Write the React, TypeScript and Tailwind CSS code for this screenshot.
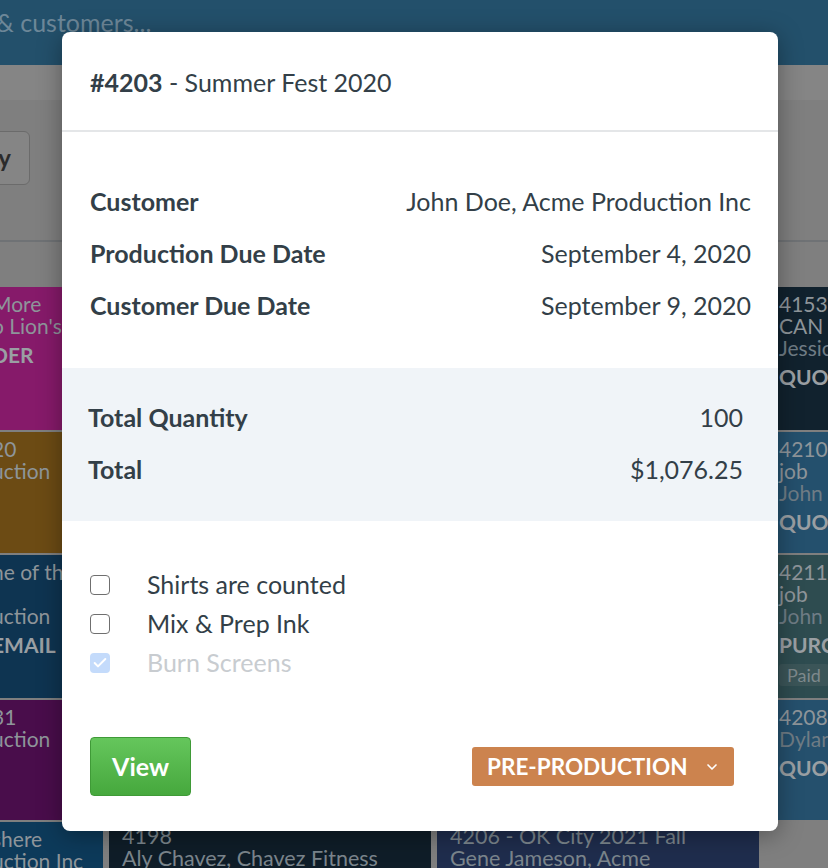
import { Check, ChevronDown } from "lucide-react";

const ink = "text-[#333f48]";

interface Card {
  bg: string;
  h: string;
  lines: string[];
  sub?: string[];
  status?: string;
  badge?: string;
}

const leftCards: Card[] = [
  { bg: "bg-[#861a6a]", h: "h-[143px]", lines: ["More", "o Lion's"], status: "DER" },
  { bg: "bg-[#6c4b14]", h: "h-[121px]", lines: ["20", "uction"] },
  { bg: "bg-[#0e3451]", h: "h-[143px]", lines: ["ne of th", "\u00a0", "uction"], status: "EMAIL" },
  { bg: "bg-[#490d4b]", h: "h-[120px]", lines: ["31", "uction"] },
  { bg: "bg-[#0d3a5a]", h: "h-[60px]", lines: ["shere", "uction Inc"] },
];

const rightCards: Card[] = [
  { bg: "bg-[#11222e]", h: "h-[143px]", lines: ["4153 - Spring", "CAN Koozies"], sub: ["Jessica Smith"], status: "QUOTE" },
  { bg: "bg-[#24506d]", h: "h-[121px]", lines: ["4210 - Test", "job"], sub: ["John Doe"], status: "QUOTE" },
  { bg: "bg-[#2e4c50]", h: "h-[143px]", lines: ["4211 - Test", "job"], sub: ["John Doe"], status: "PURCHASE ORDER", badge: "Paid" },
  { bg: "bg-[#25506d]", h: "h-[120px]", lines: ["4208 - Tees"], sub: ["Dylan Ross"], status: "QUOTE" },
];

function BoardCard({ card, shift }: { card: Card; shift?: boolean }) {
  return (
    <div className={`${card.bg} ${card.h} overflow-hidden whitespace-nowrap pt-[6px] text-[21px] leading-[22px] ${shift ? "-ml-[8px] pl-0" : "pl-[14px]"}`}>
      {card.lines.map((l, i) => (
        <div key={i} className="text-[#8e959a]">
          {l}
        </div>
      ))}
      {card.sub?.map((l, i) => (
        <div key={i} className="text-[#6f7c85]">
          {l}
        </div>
      ))}
      {card.status && (
        <div className="mt-[7px] font-bold text-[#9a9fa3]">{card.status}</div>
      )}
      {card.badge && (
        <div className="mt-[8px] inline-block rounded-[3px] bg-[#3b5558] px-[8px] text-[18px] leading-[22px] text-[#7e898c]">
          {card.badge}
        </div>
      )}
    </div>
  );
}

function Row({ label, value }: { label: string; value: string }) {
  return (
    <div className="flex h-[52px] items-center justify-between">
      <span className="font-bold">{label}</span>
      <span>{value}</span>
    </div>
  );
}

function CheckRow({ label, done }: { label: string; done?: boolean }) {
  return (
    <div className="flex h-[39px] items-center">
      {done ? (
        <span className="flex h-[20px] w-[20px] items-center justify-center rounded-[4px] bg-[#c4dbfb]">
          <Check className="h-[16px] w-[16px] text-white" strokeWidth={3} />
        </span>
      ) : (
        <span className="h-[20px] w-[20px] rounded-[4px] border-[1.5px] border-[#6f6f6f] bg-white" />
      )}
      <span className={`ml-[37px] ${done ? "text-[#c8ccd0]" : ink}`}>{label}</span>
    </div>
  );
}

export default function App() {
  return (
    <div className="relative h-[868px] w-[828px] overflow-hidden bg-[#7f7f7f] font-['Lato',sans-serif]">
      {/* dimmed board behind the dialog */}
      <div className="flex h-[65px] items-start bg-[#23506b] pt-[4px]">
        <span className="-ml-[4px] text-[25px] text-[#6d8798]">&amp; customers...</span>
      </div>
      <div className="h-[35px] bg-[#858585]" />
      <div className="h-[140px] pt-[31px]">
        <div className="-ml-[20px] flex h-[54px] w-[50px] items-center justify-end rounded-[6px] border border-[#6b6b6b] bg-[#858585] pr-[18px] text-[24px] font-bold text-[#2b2b2b]">
          y
        </div>
      </div>
      <div className="h-[2px] bg-[#6f7275]" />
      <div className="h-[45px]" />
      <div className="flex gap-[6px]">
        <div className="flex w-[103px] shrink-0 flex-col gap-[2px]">
          {leftCards.map((c, i) => (
            <BoardCard key={i} card={c} shift />
          ))}
        </div>
        <div className="flex w-[322px] shrink-0 flex-col">
          <div className="h-[535px]" />
          <div className="h-[60px] whitespace-nowrap bg-[#0f1d28] pl-[13px] pt-[3px] text-[21.5px] leading-[22px] text-[#7b858c]">
            <div>4198</div>
            <div>Aly Chavez, Chavez Fitness</div>
          </div>
        </div>
        <div className="flex w-[322px] shrink-0 flex-col">
          <div className="h-[535px]" />
          <div className="h-[60px] whitespace-nowrap bg-[#1f2d4d] pl-[13px] pt-[3px] text-[21.5px] leading-[22px] text-[#7b858c]">
            <div>4206 - OK City 2021 Fall</div>
            <div>Gene Jameson, Acme</div>
          </div>
        </div>
        <div className="flex w-[322px] shrink-0 flex-col gap-[2px]">
          {rightCards.map((c, i) => (
            <BoardCard key={i} card={c} />
          ))}
        </div>
      </div>

      {/* dialog */}
      <div className={`absolute left-[62px] top-[32px] w-[716px] overflow-hidden rounded-[8px] bg-white text-[25px] shadow-[0_4px_24px_rgba(0,0,0,0.35)] ${ink}`}>
        <div className="flex h-[100px] items-center border-b-2 border-[#e4e6e8] pl-[28px] pt-[4px]">
          <span className="font-bold">#4203</span>
          <span>&nbsp;- Summer Fest 2020</span>
        </div>
        <div className="pb-[36px] pl-[28px] pr-[27px] pt-[44px]">
          <Row label="Customer" value="John Doe, Acme Production Inc" />
          <Row label="Production Due Date" value="September 4, 2020" />
          <Row label="Customer Due Date" value="September 9, 2020" />
        </div>
        <div className="bg-[#f0f4f8] pb-[25px] pl-[26px] pr-[35px] pt-[24px]">
          <Row label="Total Quantity" value="100" />
          <Row label="Total" value="$1,076.25" />
        </div>
        <div className="pb-[35px] pl-[28px] pr-[44px] pt-[44px]">
          <CheckRow label="Shirts are counted" />
          <CheckRow label="Mix & Prep Ink" />
          <CheckRow label="Burn Screens" done />
          <div className="mt-[55px] flex items-center justify-between">
            <button className="h-[59px] w-[101px] rounded-[4px] border border-[#3f9a37] bg-gradient-to-b from-[#65c65c] to-[#46a83d] text-[25px] font-bold text-white">
              View
            </button>
            <button className="flex h-[39px] w-[262px] items-center rounded-[3px] bg-[#cc834e] pl-[15px] text-[22.5px] font-bold text-white">
              PRE-PRODUCTION
              <ChevronDown className="ml-[17px] h-[16px] w-[16px]" strokeWidth={2.5} />
            </button>
          </div>
        </div>
      </div>
    </div>
  );
}
